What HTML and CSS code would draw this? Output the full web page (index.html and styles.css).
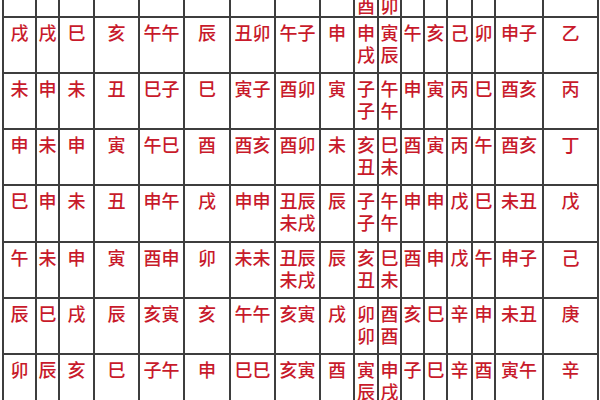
FILE: index.html
```html
<!DOCTYPE html>
<html lang="zh">
<head>
<meta charset="utf-8">
<title>表</title>
<link rel="stylesheet" href="styles.css">
</head>
<body>
<div class="sheet">
  <div class="c top"></div><div class="c top"></div><div class="c top"></div><div class="c top"></div><div class="c top"></div><div class="c top"></div><div class="c top"></div><div class="c top"></div><div class="c top"></div><div class="c top">酉</div><div class="c top">卯</div><div class="c top"></div><div class="c top"></div><div class="c top"></div><div class="c top"></div><div class="c top"></div><div class="c top"></div>

  <div class="c">戌</div><div class="c">戌</div><div class="c">巳</div><div class="c">亥</div><div class="c">午午</div><div class="c">辰</div><div class="c">丑卯</div><div class="c">午子</div><div class="c">申</div><div class="c">申<br>戌</div><div class="c">寅<br>辰</div><div class="c">午</div><div class="c">亥</div><div class="c">己</div><div class="c">卯</div><div class="c">申子</div><div class="c">乙</div>

  <div class="c">未</div><div class="c">申</div><div class="c">未</div><div class="c">丑</div><div class="c">巳子</div><div class="c">巳</div><div class="c">寅子</div><div class="c">酉卯</div><div class="c">寅</div><div class="c">子<br>子</div><div class="c">午<br>午</div><div class="c">申</div><div class="c">寅</div><div class="c">丙</div><div class="c">巳</div><div class="c">酉亥</div><div class="c">丙</div>

  <div class="c">申</div><div class="c">未</div><div class="c">申</div><div class="c">寅</div><div class="c">午巳</div><div class="c">酉</div><div class="c">酉亥</div><div class="c">酉卯</div><div class="c">未</div><div class="c">亥<br>丑</div><div class="c">巳<br>未</div><div class="c">酉</div><div class="c">寅</div><div class="c">丙</div><div class="c">午</div><div class="c">酉亥</div><div class="c">丁</div>

  <div class="c">巳</div><div class="c">申</div><div class="c">未</div><div class="c">丑</div><div class="c">申午</div><div class="c">戌</div><div class="c">申申</div><div class="c">丑辰<br>未戌</div><div class="c">辰</div><div class="c">子<br>子</div><div class="c">午<br>午</div><div class="c">申</div><div class="c">申</div><div class="c">戊</div><div class="c">巳</div><div class="c">未丑</div><div class="c">戊</div>

  <div class="c">午</div><div class="c">未</div><div class="c">申</div><div class="c">寅</div><div class="c">酉申</div><div class="c">卯</div><div class="c">未未</div><div class="c">丑辰<br>未戌</div><div class="c">辰</div><div class="c">亥<br>丑</div><div class="c">巳<br>未</div><div class="c">酉</div><div class="c">申</div><div class="c">戊</div><div class="c">午</div><div class="c">申子</div><div class="c">己</div>

  <div class="c">辰</div><div class="c">巳</div><div class="c">戌</div><div class="c">辰</div><div class="c">亥寅</div><div class="c">亥</div><div class="c">午午</div><div class="c">亥寅</div><div class="c">戌</div><div class="c">卯<br>卯</div><div class="c">酉<br>酉</div><div class="c">亥</div><div class="c">巳</div><div class="c">辛</div><div class="c">申</div><div class="c">未丑</div><div class="c">庚</div>

  <div class="c">卯</div><div class="c">辰</div><div class="c">亥</div><div class="c">巳</div><div class="c">子午</div><div class="c">申</div><div class="c">巳巳</div><div class="c">亥寅</div><div class="c">酉</div><div class="c">寅<br>辰</div><div class="c">申<br>戌</div><div class="c">子</div><div class="c">巳</div><div class="c">辛</div><div class="c">酉</div><div class="c">寅午</div><div class="c">辛</div>
</div>
</body>
</html>
```

FILE: styles.css
```css
html, body {
  margin: 0;
  padding: 0;
  background: #ffffff;
  overflow: hidden;
}

.sheet {
  display: grid;
  grid-template-columns: 33px 23px 35px 45px 45px 46px 45px 45px 34px 24px 23px 23px 23px 25px 23px 48px 55px;
  grid-template-rows: 18px 56px 56px 56px 57px 56px 56px 56px;
  margin-left: 2px;
  border-left: 2px solid #3e3e3e;
  width: max-content;
  font-family: "Noto Sans CJK SC", "Noto Sans CJK TC", sans-serif;
  font-size: 18px;
  font-weight: 500;
  line-height: 22px;
  color: #c81a2b;
}

.c {
  box-sizing: border-box;
  border-right: 2px solid #3e3e3e;
  border-bottom: 2px solid #3e3e3e;
  padding-top: 3px;
  text-align: center;
  white-space: nowrap;
  overflow: hidden;
}

.c.top {
  padding-top: 0;
  display: flex;
  align-items: flex-end;
  justify-content: center;
}
```
